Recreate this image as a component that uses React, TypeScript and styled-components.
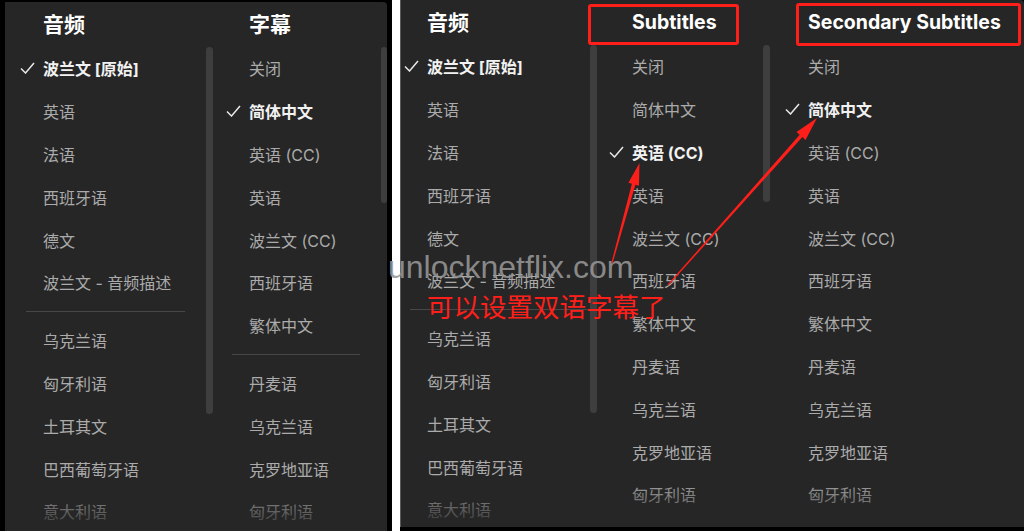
import React from "react";
import styled, { createGlobalStyle } from "styled-components";

const GlobalStyle = createGlobalStyle`
  html, body {
    margin: 0;
    padding: 0;
    background: #ffffff;
  }
  body {
    font-family: Inter, "Noto Sans CJK SC", sans-serif;
  }
`;

const Page = styled.div`
  position: relative;
  display: flex;
  width: 1024px;
  height: 531px;
  overflow: hidden;
  background: #ffffff;
`;

const Shot = styled.div<{ $w: number; $pad: string; $gap?: number }>`
  flex: none;
  display: flex;
  box-sizing: border-box;
  width: ${(p) => p.$w}px;
  margin-left: ${(p) => p.$gap ?? 0}px;
  padding: ${(p) => p.$pad};
  background: #000000;
`;

const Panel = styled.div<{ $edge?: boolean }>`
  position: relative;
  flex: 1;
  display: flex;
  background: #262626;
  border-top-right-radius: 4px;
  border-left: ${(p) => (p.$edge ? "1px solid #5a5a5a" : "none")};
  overflow: hidden;

  &::after {
    content: "";
    position: absolute;
    left: 0;
    right: 0;
    bottom: 0;
    height: 48px;
    background: linear-gradient(rgba(38, 38, 38, 0), rgba(38, 38, 38, 0.92));
    pointer-events: none;
  }
`;

const Column = styled.div<{ $w?: number }>`
  display: flex;
  flex-direction: column;
  min-height: 0;
  ${(p) => (p.$w ? `width: ${p.$w}px; flex: none;` : "flex: 1;")}
`;

const Header = styled.div<{ $indent: number; $h: number; $latin?: boolean }>`
  flex: none;
  display: flex;
  align-items: center;
  box-sizing: border-box;
  height: ${(p) => p.$h}px;
  padding-left: ${(p) => p.$indent}px;
  padding-bottom: ${(p) => (p.$latin ? 2 : 4)}px;
  color: #ffffff;
  font-weight: 700;
  font-size: ${(p) => (p.$latin ? 19.5 : 21)}px;
  white-space: nowrap;
`;

const Body = styled.div`
  flex: 1;
  min-height: 0;
  display: flex;
  align-items: flex-start;
`;

const List = styled.div<{ $pad: number }>`
  flex: 1;
  display: flex;
  flex-direction: column;
  padding-left: ${(p) => p.$pad}px;
`;

const Thumb = styled.div<{ $w: number; $h: number; $mr: number }>`
  flex: none;
  width: ${(p) => p.$w}px;
  height: ${(p) => p.$h}px;
  margin-right: ${(p) => p.$mr}px;
  border-radius: 4px;
  background: #3e3e3e;
`;

const Row = styled.div<{ $sel?: boolean }>`
  display: flex;
  align-items: center;
  height: 42.8px;
  flex: none;
  font-size: 16px;
  white-space: nowrap;
  color: ${(p) => (p.$sel ? "#f2f2f2" : "#ababab")};
  font-weight: ${(p) => (p.$sel ? 700 : 400)};
`;

const CheckSlot = styled.span`
  flex: none;
  display: flex;
  align-items: center;
  width: 23px;
`;

const Divider = styled.div<{ $w: number }>`
  flex: none;
  width: ${(p) => p.$w}px;
  height: 1px;
  margin: 7px 0 7px 6px;
  background: #474747;
`;

const Overlay = styled.div`
  position: absolute;
  inset: 0;
  pointer-events: none;
`;

const MarkBox = styled.div<{ $x: number; $y: number; $w: number; $h: number }>`
  position: absolute;
  left: ${(p) => p.$x}px;
  top: ${(p) => p.$y}px;
  width: ${(p) => p.$w}px;
  height: ${(p) => p.$h}px;
  box-sizing: border-box;
  border: 3px solid #ff1f1a;
  border-radius: 3px;
`;

const Watermark = styled.div`
  position: absolute;
  left: 388px;
  top: 251px;
  font-family: "Liberation Sans", Arial, sans-serif;
  font-size: 32px;
  line-height: 1;
  color: rgba(150, 150, 150, 0.9);
  white-space: nowrap;
`;

const Caption = styled.div`
  position: absolute;
  left: 427px;
  top: 293px;
  font-family: "Noto Sans CJK SC", sans-serif;
  font-size: 26.5px;
  line-height: 1;
  color: #ff1f1a;
  white-space: nowrap;
`;

const ArrowLayer = styled.svg`
  position: absolute;
  left: 0;
  top: 0;
`;

type Entry = string | null;

const audio: Entry[] = [
  "波兰文 [原始]",
  "英语",
  "法语",
  "西班牙语",
  "德文",
  "波兰文 - 音频描述",
  null,
  "乌克兰语",
  "匈牙利语",
  "土耳其文",
  "巴西葡萄牙语",
  "意大利语",
];

const subsLeft: Entry[] = [
  "关闭",
  "简体中文",
  "英语 (CC)",
  "英语",
  "波兰文 (CC)",
  "西班牙语",
  "繁体中文",
  null,
  "丹麦语",
  "乌克兰语",
  "克罗地亚语",
  "匈牙利语",
];

const subsRight: Entry[] = [
  "关闭",
  "简体中文",
  "英语 (CC)",
  "英语",
  "波兰文 (CC)",
  "西班牙语",
  "繁体中文",
  "丹麦语",
  "乌克兰语",
  "克罗地亚语",
  "匈牙利语",
];

function Check() {
  return (
    <svg width="15" height="12" viewBox="0 0 15 12">
      <path d="M1 6.5 L5.5 11 L14 1" fill="none" stroke="#e8e8e8" strokeWidth="1.5" />
    </svg>
  );
}

function Options({ items, selected, pad, dividerW }: { items: Entry[]; selected: string; pad: number; dividerW?: number }) {
  return (
    <List $pad={pad}>
      {items.map((it, i) =>
        it === null ? (
          <Divider key={i} $w={dividerW ?? 0} />
        ) : (
          <Row key={i} $sel={it === selected}>
            <CheckSlot>{it === selected && <Check />}</CheckSlot>
            {it}
          </Row>
        )
      )}
    </List>
  );
}

function arrow(tail: [number, number], tip: [number, number], headLen: number, headHalf: number) {
  const dx = tip[0] - tail[0];
  const dy = tip[1] - tail[1];
  const len = Math.hypot(dx, dy);
  const ux = dx / len;
  const uy = dy / len;
  const px = -uy;
  const py = ux;
  const bx = tip[0] - ux * headLen;
  const by = tip[1] - uy * headLen;
  const pt = (x: number, y: number, k: number) => `${(x + px * k).toFixed(1)},${(y + py * k).toFixed(1)}`;
  return [
    pt(tail[0], tail[1], 0.6),
    pt(bx, by, 1.8),
    pt(bx, by, headHalf),
    `${tip[0]},${tip[1]}`,
    pt(bx, by, -headHalf),
    pt(bx, by, -1.8),
    pt(tail[0], tail[1], -0.6),
  ].join(" ");
}

export default function App() {
  return (
    <>
      <GlobalStyle />
      <Page>
        <Shot $w={392} $pad="2px 5px 0 5px">
          <Panel>
            <Column $w={209}>
              <Header $h={45} $indent={38}>音频</Header>
              <Body>
                <Options items={audio} selected="波兰文 [原始]" pad={15} dividerW={159} />
                <Thumb $w={7} $h={367} $mr={1} />
              </Body>
            </Column>
            <Column>
              <Header $h={45} $indent={35}>字幕</Header>
              <Body>
                <Options items={subsLeft} selected="简体中文" pad={12} dividerW={128} />
                <Thumb $w={6} $h={156} $mr={0} />
              </Body>
            </Column>
          </Panel>
        </Shot>

        <Shot $w={624} $gap={8} $pad="0 0 4px 0">
          <Panel $edge>
            <Column $w={195}>
              <Header $h={45} $indent={26}>音频</Header>
              <Body>
                <Options items={audio} selected="波兰文 [原始]" pad={3} dividerW={180} />
                <Thumb $w={7} $h={368} $mr={0} />
              </Body>
            </Column>
            <Column $w={175}>
              <Header $h={45} $indent={36} $latin>Subtitles</Header>
              <Body>
                <Options items={subsRight} selected="英语 (CC)" pad={13} />
                <Thumb $w={7} $h={157} $mr={1} />
              </Body>
            </Column>
            <Column>
              <Header $h={45} $indent={37} $latin>Secondary Subtitles</Header>
              <Body>
                <Options items={subsRight} selected="简体中文" pad={14} />
              </Body>
            </Column>
          </Panel>
        </Shot>

        <Overlay>
          <MarkBox $x={588} $y={4} $w={151} $h={41} />
          <MarkBox $x={796} $y={3} $w={225} $h={43} />
          <Watermark>unlocknetflix.com</Watermark>
          <Caption>可以设置双语字幕了</Caption>
          <ArrowLayer width="1024" height="531" viewBox="0 0 1024 531">
            <polygon points={arrow([612, 263], [639.5, 163], 22, 5.5)} fill="#ff1f1a" />
            <polygon points={arrow([668, 285], [817, 118], 24, 6)} fill="#ff1f1a" />
          </ArrowLayer>
        </Overlay>
      </Page>
    </>
  );
}
